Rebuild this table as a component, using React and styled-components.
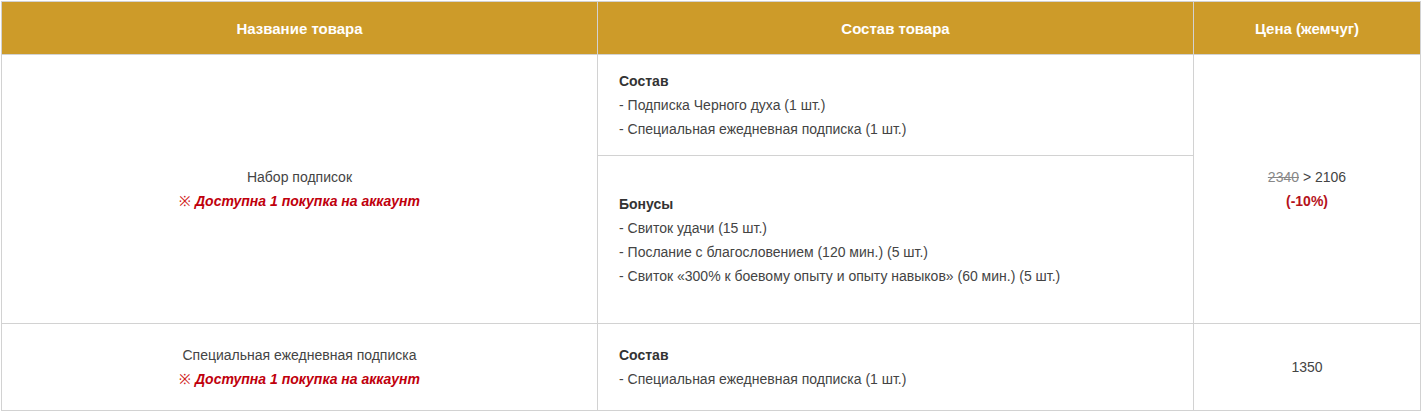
import React from 'react'
import styled, { createGlobalStyle } from 'styled-components'

const Global = createGlobalStyle`
  body {
    margin: 0;
    padding: 1px;
    background: #fff;
    font-family: "Liberation Sans", Arial, sans-serif;
  }
`

const Table = styled.table`
  width: 1420px;
  border-collapse: collapse;
  table-layout: fixed;
  font-size: 14px;
  color: #444;
`

const Head = styled.th`
  height: 52px;
  background: #cd9b29;
  color: #fff;
  font-weight: bold;
  font-size: 15px;
  border: 1px solid #d2d2d2;
  text-align: center;
  vertical-align: middle;
  padding: 0;
`

const Row = styled.tr`
  height: ${p => p.h}px;
`

const Cell = styled.td`
  border: 1px solid #d2d2d2;
  vertical-align: middle;
  text-align: ${p => (p.left ? 'left' : 'center')};
  padding: ${p => (p.left ? '0 21px' : '0 10px')};
  line-height: 24px;
`

const Title = styled.div`
  font-weight: bold;
  color: #333;
`

const Limit = styled.div`
  color: #c0000c;
  font-weight: bold;
  font-style: italic;
`

const Mark = styled.span`
  font-weight: normal;
  font-style: normal;
  color: #d02020;
`

const Old = styled.s`
  color: #888;
`

const Discount = styled.div`
  color: #b5121b;
  font-weight: bold;
`

const Items = ({ title, items }) => (
  <>
    <Title>{title}</Title>
    {items.map(i => (
      <div key={i}>- {i}</div>
    ))}
  </>
)

const LimitNote = () => (
  <Limit>
    <Mark>※</Mark> Доступна 1 покупка на аккаунт
  </Limit>
)

export default function App() {
  return (
    <>
      <Global />
      <Table>
        <colgroup>
          <col style={{ width: 596 }} />
          <col style={{ width: 596 }} />
          <col />
        </colgroup>
        <thead>
          <tr>
            <Head>Название товара</Head>
            <Head>Состав товара</Head>
            <Head>Цена (жемчуг)</Head>
          </tr>
        </thead>
        <tbody>
          <Row h={101}>
            <Cell rowSpan={2}>
              <div>Набор подписок</div>
              <LimitNote />
            </Cell>
            <Cell left>
              <Items
                title="Состав"
                items={['Подписка Черного духа (1 шт.)', 'Специальная ежедневная подписка (1 шт.)']}
              />
            </Cell>
            <Cell rowSpan={2}>
              <div>
                <Old>2340</Old> &gt; 2106
              </div>
              <Discount>(-10%)</Discount>
            </Cell>
          </Row>
          <Row h={168}>
            <Cell left>
              <Items
                title="Бонусы"
                items={[
                  'Свиток удачи (15 шт.)',
                  'Послание с благословением (120 мин.) (5 шт.)',
                  'Свиток «300% к боевому опыту и опыту навыков» (60 мин.) (5 шт.)',
                ]}
              />
            </Cell>
          </Row>
          <Row h={87}>
            <Cell>
              <div>Специальная ежедневная подписка</div>
              <LimitNote />
            </Cell>
            <Cell left>
              <Items title="Состав" items={['Специальная ежедневная подписка (1 шт.)']} />
            </Cell>
            <Cell>1350</Cell>
          </Row>
        </tbody>
      </Table>
    </>
  )
}
